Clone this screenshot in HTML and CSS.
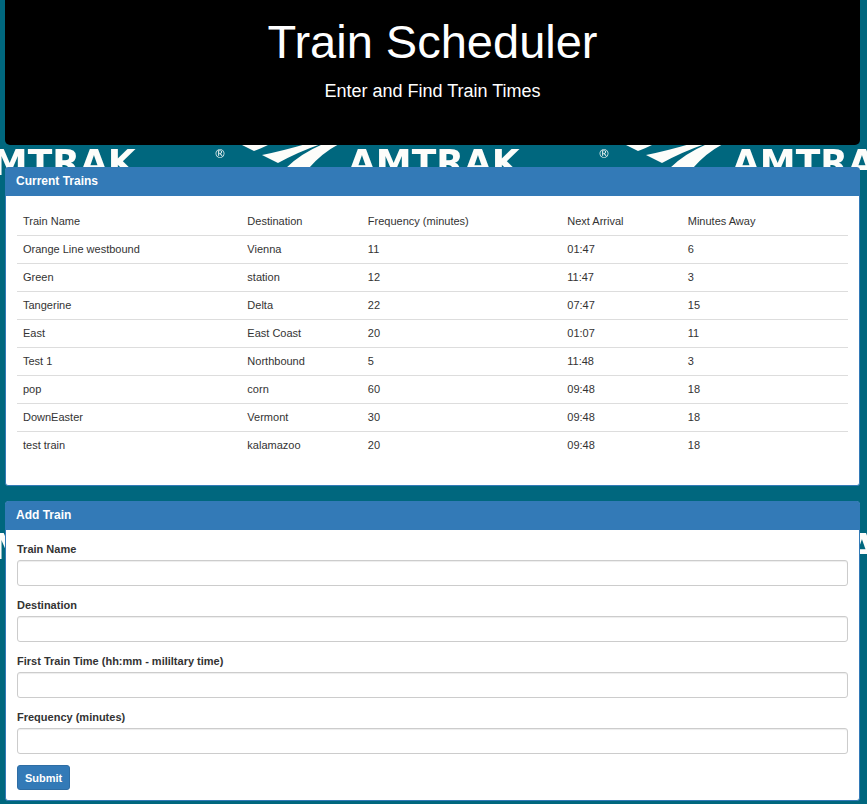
FILE: index.html
```html
<!DOCTYPE html>
<html lang="en">
<head>
<meta charset="utf-8">
<meta name="viewport" content="width=device-width, initial-scale=1">
<title>Train Scheduler</title>
<link rel="stylesheet" href="styles.css">
</head>
<body>
<svg class="backdrop" aria-hidden="true">
  <defs>
    <pattern id="tile" width="384" height="384" patternUnits="userSpaceOnUse">
      <path d="M240 144L254 151Q260 149 270 144Z"/>
      <path d="M262 155Q282 151 306 144H321Q298 152 278 163Z"/>
      <path d="M323 144H339Q322 153 309 168H286Q300 154 323 144Z"/>
      <text class="brand" x="-36" y="175">AMTRAK</text>
      <text class="brand" x="348" y="175">AMTRAK</text>
      <text class="mark" x="214" y="158">®</text>
    </pattern>
  </defs>
  <rect width="100%" height="100%" fill="url(#tile)"/>
</svg>
<div class="container">
  <header class="jumbotron">
    <h1>Train Scheduler</h1>
    <p>Enter and Find Train Times</p>
  </header>
  <main>
    <section class="panel">
      <h2 class="panel-heading">Current Trains</h2>
      <div class="panel-body">
        <table>
          <colgroup>
            <col class="col-name">
            <col class="col-destination">
            <col class="col-frequency">
            <col class="col-arrival">
            <col>
          </colgroup>
          <thead>
            <tr><th>Train Name</th><th>Destination</th><th>Frequency (minutes)</th><th>Next Arrival</th><th>Minutes Away</th></tr>
          </thead>
          <tbody>
            <tr><td>Orange Line westbound</td><td>Vienna</td><td>11</td><td>01:47</td><td>6</td></tr>
            <tr><td>Green</td><td>station</td><td>12</td><td>11:47</td><td>3</td></tr>
            <tr><td>Tangerine</td><td>Delta</td><td>22</td><td>07:47</td><td>15</td></tr>
            <tr><td>East</td><td>East Coast</td><td>20</td><td>01:07</td><td>11</td></tr>
            <tr><td>Test 1</td><td>Northbound</td><td>5</td><td>11:48</td><td>3</td></tr>
            <tr><td>pop</td><td>corn</td><td>60</td><td>09:48</td><td>18</td></tr>
            <tr><td>DownEaster</td><td>Vermont</td><td>30</td><td>09:48</td><td>18</td></tr>
            <tr><td>test train</td><td>kalamazoo</td><td>20</td><td>09:48</td><td>18</td></tr>
          </tbody>
        </table>
      </div>
    </section>
    <section class="panel">
      <h2 class="panel-heading">Add Train</h2>
      <form class="panel-body">
        <div class="form-group">
          <label for="train-name">Train Name</label>
          <input id="train-name" type="text">
        </div>
        <div class="form-group">
          <label for="destination">Destination</label>
          <input id="destination" type="text">
        </div>
        <div class="form-group">
          <label for="first-time">First Train Time (hh:mm - mililtary time)</label>
          <input id="first-time" type="text">
        </div>
        <div class="form-group">
          <label for="frequency">Frequency (minutes)</label>
          <input id="frequency" type="text">
        </div>
        <button type="submit">Submit</button>
      </form>
    </section>
  </main>
</div>
</body>
</html>
```

FILE: styles.css
```css
* {
  box-sizing: border-box;
}

body {
  margin: 0;
  background: #00677e;
  color: #333;
  font: 11px/16px "Liberation Sans", Arial, sans-serif;
}

.backdrop {
  position: absolute;
  inset: 0;
  z-index: -1;
  width: 100%;
  height: 100%;
  fill: #fdfdfa;
}

.brand {
  font: bold 36px "DejaVu Sans", sans-serif;
}

.mark {
  font: 12px "DejaVu Sans", sans-serif;
}

.container {
  padding: 0 7px 4px 5px;
}

.jumbotron {
  margin-bottom: 22px;
  padding: 16px 12px 42px;
  border-radius: 0 0 5px 5px;
  background: #000;
  color: #fff;
  text-align: center;
}

.jumbotron h1 {
  margin: 0 0 12px;
  font-size: 47px;
  font-weight: normal;
  line-height: 51px;
}

.jumbotron p {
  margin: 0;
  font-size: 18px;
  line-height: 24px;
}

main {
  display: flex;
  flex-direction: column;
  gap: 15px;
}

.panel {
  border: 1px solid #337ab7;
  border-radius: 3px;
  background: #fff;
}

.panel-heading {
  margin: 0;
  padding: 5px 10px 7px;
  background: #337ab7;
  color: #fff;
  font-size: 12px;
  line-height: 16px;
}

.panel-body {
  padding: 11px 11px 10px;
}

table {
  width: 100%;
  margin-bottom: 16px;
  border-collapse: collapse;
  table-layout: fixed;
}

.col-name {
  width: 27%;
}

.col-destination,
.col-arrival {
  width: 14.5%;
}

.col-frequency {
  width: 24%;
}

th,
td {
  height: 28px;
  padding: 5px 6px;
  font-weight: normal;
  text-align: left;
}

td {
  border-top: 1px solid #ddd;
}

.form-group {
  margin-bottom: 11px;
}

label {
  display: block;
  margin-bottom: 3px;
  font-weight: bold;
}

input {
  display: block;
  width: 100%;
  height: 26px;
  padding: 4px 9px;
  border: 1px solid #ccc;
  border-radius: 3px;
  background: #fff;
  box-shadow: inset 0 1px 1px rgba(0, 0, 0, 0.075);
  color: #555;
  font: inherit;
}

button {
  height: 25px;
  padding: 0 7px;
  border: 1px solid #2e6da4;
  border-radius: 3px;
  background: #337ab7;
  color: #fff;
  font: bold 11px/16px "Liberation Sans", Arial, sans-serif;
}
```
